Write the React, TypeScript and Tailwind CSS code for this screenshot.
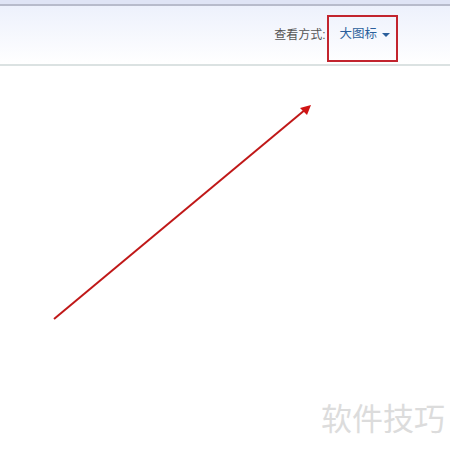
export default function App() {
  return (
    <div
      className="relative w-[450px] h-[455px] bg-white overflow-hidden"
      style={{ fontFamily: '"Liberation Sans", "Noto Sans CJK SC", sans-serif' }}
    >
      {/* toolbar */}
      <div className="h-[4px] bg-[#dfe4f5]" />
      <div className="h-[2px] bg-[#b7bbcb]" />
      <div className="h-[60px] bg-gradient-to-b from-[#edf1fc] to-white border-b-2 border-[#dbe2e2] flex items-center justify-end pr-[60px] pb-[1px]">
        <span className="text-[12px] text-[#555]">查看方式:</span>
        <span className="ml-[14px] text-[12.5px] text-[#2b5f9c]">大图标</span>
        <span className="ml-[5px] mt-[1px] w-0 h-0 border-l-[4px] border-r-[4px] border-t-[4px] border-l-transparent border-r-transparent border-t-[#2b5f9c]" />
      </div>

      {/* annotation box */}
      <div className="absolute left-[327px] top-[15px] w-[71px] h-[47px] border-2 border-[#c2242e]" />

      {/* annotation arrow */}
      <svg className="absolute left-0 top-0" width="450" height="455" viewBox="0 0 450 455">
        <line x1="54" y1="319" x2="306" y2="109" stroke="#c01818" strokeWidth="2" />
        <path d="M311 105 L300 108 L307 115 Z" fill="#d01414" />
      </svg>

      {/* watermark */}
      <div className="absolute left-[321px] top-[404px] text-[31px] leading-none text-[#dcdcdc]">
        软件技巧
      </div>
    </div>
  );
}
